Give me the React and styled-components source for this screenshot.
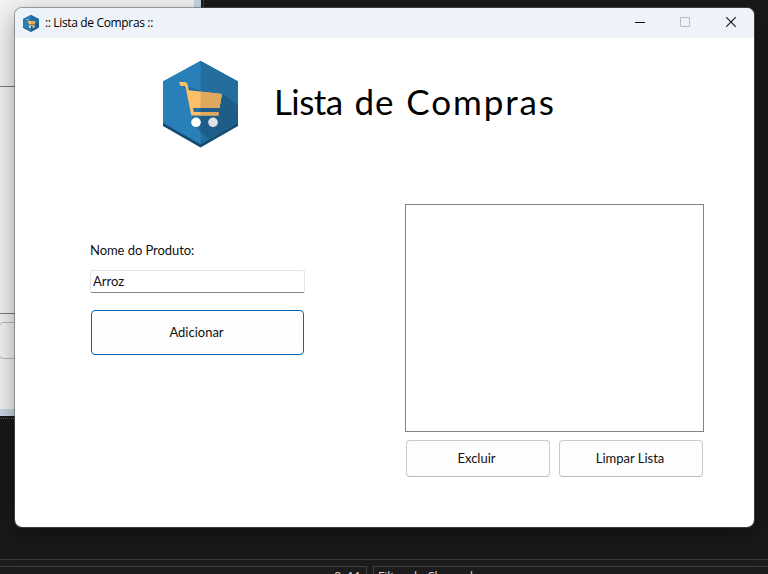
import React from "react";
import styled, { createGlobalStyle } from "styled-components";

const GlobalStyle = createGlobalStyle`
  *, *::before, *::after { box-sizing: border-box; }
  body { margin: 0; background: #191919; }
  button, input { font: inherit; color: inherit; }
`;

const Desktop = styled.main`
  position: relative;
  width: 768px;
  height: 574px;
  overflow: hidden;
  background: #191919;
  font-family: Lato, "Open Sans", sans-serif;
  color: #111;
`;

const BackWindow = styled.div`
  position: absolute;
  left: 0;
  top: 0;
  width: 201px;
  height: 416px;
  display: flex;
  flex-direction: column;
  background: #f3f3f3;
  border-right: 7px solid #c9d6e5;
  border-bottom: 7px solid #c9d6e5;
`;

const BackList = styled.div`
  margin-top: 86px;
  height: 228px;
  border: solid #7b7b7e;
  border-width: 1px 0;
`;

const BackButton = styled.div`
  margin: 8px 0 0 -1px;
  height: 37px;
  border: 1px solid #bcbcbc;
  border-radius: 4px;
`;

const DottedEdge = styled.div`
  position: absolute;
  left: -2px;
  top: -2px;
  width: 206px;
  height: 421px;
  border: 1px dotted #5c5c5c;
`;

const StatusStrip = styled.footer`
  position: absolute;
  left: 0;
  bottom: 0;
  width: 768px;
  height: 15px;
  padding-top: 6px;
  display: flex;
  gap: 6px;
  border-top: 1px solid #3a3a3a;
  background: #1c1c1c;
`;

const StatusCell = styled.div`
  width: ${(p) => p.$width || "auto"};
  flex: ${(p) => (p.$width ? "none" : 1)};
  height: 24px;
  padding: 0 5px 0 4px;
  border: solid #3f3f3f;
  border-width: 1px ${(p) => (p.$width ? "1px 0 0" : "0 0 1px")};
  text-align: ${(p) => (p.$width ? "right" : "left")};
  font: 12px/20px "Open Sans", sans-serif;
  white-space: pre;
  color: #ddd;
`;

const Window = styled.section`
  position: absolute;
  left: 14px;
  top: 7px;
  width: 741px;
  height: 521px;
  display: flex;
  flex-direction: column;
  overflow: hidden;
  border: 1px solid rgba(92, 92, 92, 0.55);
  border-radius: 8px;
  background: #fff;
  background-clip: padding-box;
  box-shadow: 0 8px 24px rgba(0, 0, 0, 0.36);
`;

const TitleBar = styled.header`
  height: 30px;
  flex: none;
  display: flex;
  align-items: center;
  padding-left: 8px;
  background: #eef3f9;
`;

const WindowTitle = styled.span`
  flex: 1;
  margin-left: 6px;
  font: 12px/16px "Open Sans", sans-serif;
  letter-spacing: -0.35px;
  color: #000;
`;

const Caption = styled.button`
  width: 46px;
  height: 30px;
  padding: 0 0 2px;
  display: grid;
  place-items: center;
  border: 0;
  background: none;
  color: ${(p) => (p.disabled ? "#b9bdc2" : "#111")};

  &:first-of-type { padding-left: 2px; }
`;

const Content = styled.div`
  flex: 1;
  display: flex;
  flex-direction: column;
`;

const Banner = styled.div`
  height: 166px;
  padding: 23px 0 0 148px;
  display: flex;
  align-items: flex-start;
`;

const Heading = styled.h1`
  margin: 16px 0 0 35px;
  font-size: 35px;
  line-height: 48px;
  font-weight: 400;
  word-spacing: 3px;
  white-space: nowrap;
  color: #000;
`;

const Word = styled.span`
  letter-spacing: ${(p) => p.$spacing};
`;

const Columns = styled.div`
  display: flex;
  gap: 100px;
  padding-left: 75px;
`;

const Form = styled.div`
  width: 215px;
  padding-top: 36px;
  display: flex;
  flex-direction: column;
`;

const Label = styled.label`
  height: 20px;
  font-size: 13px;
  line-height: 20px;
  letter-spacing: -0.06px;
`;

const Field = styled.input`
  margin-top: 10px;
  width: 215px;
  height: 23px;
  padding: 0 2px 1px;
  border: 1px solid #e5e5e5;
  border-bottom-color: #858585;
  border-radius: 2px;
  outline: 0;
  background: #fff;
  font-size: 13px;
  letter-spacing: 0;
`;

const Button = styled.button`
  width: ${(p) => p.$width};
  height: ${(p) => p.$height};
  padding: 0 ${(p) => p.$shift || "0"} 2px 0;
  border: 1px solid ${(p) => (p.$primary ? "#0067b0" : "#cacaca")};
  border-bottom-color: ${(p) => (p.$primary ? "#0067b0" : "#bababa")};
  border-radius: 4px;
  background: #fdfdfd;
  font-size: 13px;
  letter-spacing: ${(p) => p.$spacing || "0"};
`;

const AddRow = styled.div`
  padding: 17px 0 0 1px;
  display: flex;
`;

const ListPanel = styled.div`
  width: 299px;
`;

const ProductList = styled.div`
  height: 228px;
  border: 1px solid #828387;
  background: #fff;
`;

const Actions = styled.div`
  padding: 8px 1px 0;
  display: flex;
  gap: 9px;
`;

function CartLogo({ width, height }) {
  return (
    <svg width={width} height={height} viewBox="0 0 76 87" preserveAspectRatio="none" aria-hidden="true">
      <path d="M37.5 0 75 20.5V65L37.5 86.5 0 65V20.5Z" fill="#124a70" />
      <path d="M37.5 0 75 20.5V62L37.5 83.2 0 62V20.5Z" fill="#2980b9" />
      <path d="M37.5 0 75 20.5V62L37.5 83.2Z" fill="#236e9f" />
      <path d="M17 23 37.5 30 60 33 75 45v17L46 78.3 29 63V53L25 30Z" fill="#1e5d87" />
      <path d="M17 23 37.5 30v41L29 63V53L25 30Z" fill="#236e9f" />
      <path d="M16 21h5.5q2.5 0 3.2 3l1.1 5.2L59 33 56.5 47H30l.8 4H55.5v3.5H28.3L23 28l-1.1-3H17.5Z" fill="#fdbf69" />
      <path d="M37.5 30.5 59 33 56.5 47h-19ZM37.5 51h18v3.5h-18Z" fill="#dfa85f" />
      <circle cx="33" cy="61.3" r="4.8" fill="#fff" />
      <circle cx="50" cy="61.3" r="4.8" fill="#dfe1e7" />
    </svg>
  );
}

export default function App() {
  return (
    <Desktop>
      <GlobalStyle />
      <DottedEdge />
      <BackWindow>
        <BackList />
        <BackButton />
      </BackWindow>
      <StatusStrip>
        <StatusCell $width="367px">8  11</StatusCell>
        <StatusCell>Filtro de Channel</StatusCell>
      </StatusStrip>
      <Window>
        <TitleBar>
          <CartLogo width={16} height={17} />
          <WindowTitle>:: Lista de Compras ::</WindowTitle>
          <Caption aria-label="Minimizar">
            <svg width="10" height="10" viewBox="0 0 10 10"><path d="M0 5.5h10" stroke="currentColor" /></svg>
          </Caption>
          <Caption aria-label="Maximizar" disabled>
            <svg width="10" height="10" viewBox="0 0 10 10"><rect x=".5" y=".5" width="9" height="9" rx=".5" fill="none" stroke="currentColor" /></svg>
          </Caption>
          <Caption aria-label="Fechar">
            <svg width="10" height="10" viewBox="0 0 10 10"><path d="m.2.2 9.6 9.6M9.8.2.2 9.8" stroke="currentColor" strokeWidth="1.1" /></svg>
          </Caption>
        </TitleBar>
        <Content>
          <Banner>
            <CartLogo width={76} height={87} />
            <Heading>
              <Word $spacing="-0.6px">Lista</Word> <Word $spacing="0.9px">de</Word> <Word $spacing="1.9px">Compras</Word>
            </Heading>
          </Banner>
          <Columns>
            <Form>
              <Label htmlFor="produto">Nome do Produto:</Label>
              <Field id="produto" defaultValue="Arroz" />
              <AddRow>
                <Button $primary $width="213px" $height="45px" $shift="2px">Adicionar</Button>
              </AddRow>
            </Form>
            <ListPanel>
              <ProductList />
              <Actions>
                <Button $width="144px" $height="37px" $shift="3px">Excluir</Button>
                <Button $width="144px" $height="37px" $shift="2px">Limpar Lista</Button>
              </Actions>
            </ListPanel>
          </Columns>
        </Content>
      </Window>
    </Desktop>
  );
}
